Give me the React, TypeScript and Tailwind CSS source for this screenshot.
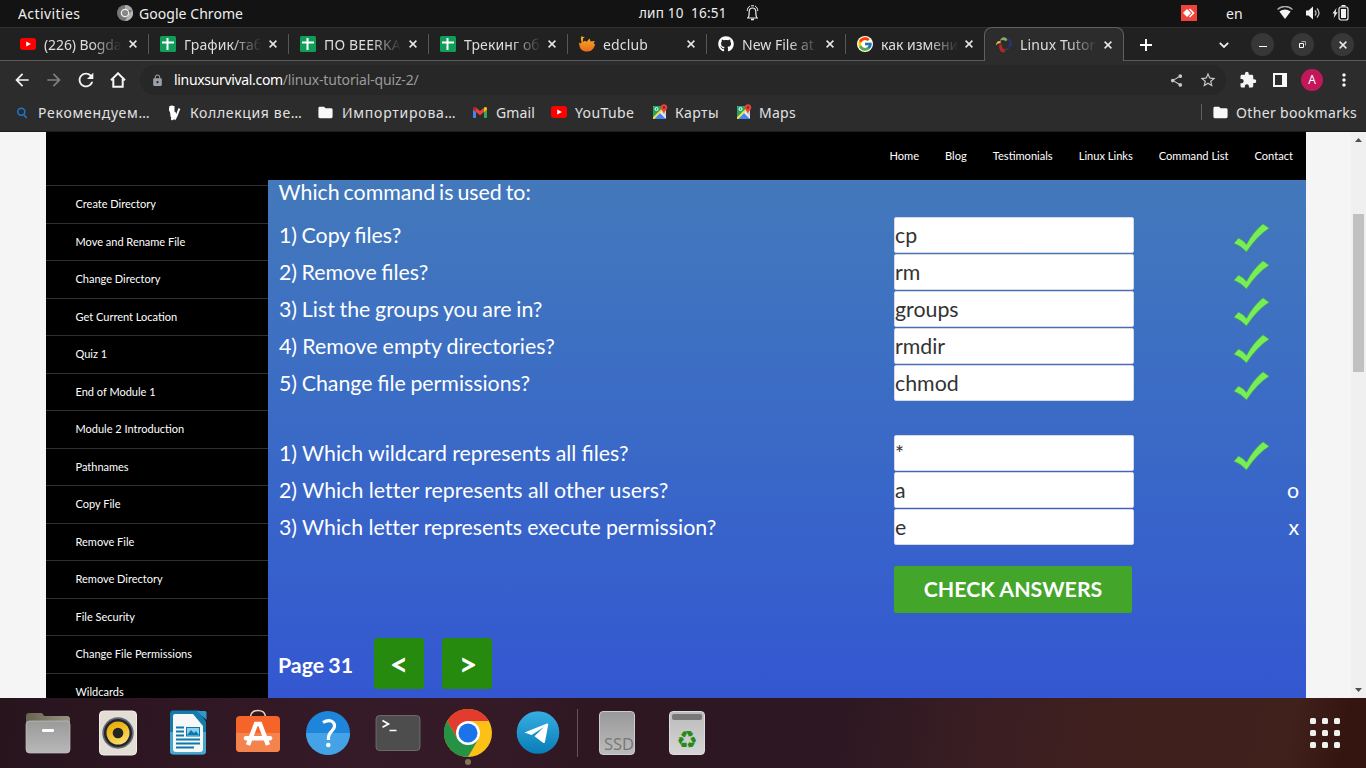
import React from "react";
import {
  MdArrowBack, MdArrowForward, MdRefresh, MdShare, MdStarBorder, MdExtension, MdLock, MdFolder, MdMoreVert,
} from "react-icons/md";
import { FaGithub } from "react-icons/fa";
import { FcGoogle } from "react-icons/fc";

const YouTube = () => (
  <svg width="16" height="12" viewBox="0 0 16 12"><rect width="16" height="12" rx="3" fill="#f00" /><path d="M6.2 3.5 11 6 6.2 8.5z" fill="#fff" /></svg>
);
const Sheets = () => (
  <svg width="16" height="16" viewBox="0 0 16 16"><rect width="16" height="16" rx="1.5" fill="#0f9d58" /><path d="M6.500 2h2v12h-2zM2 5.5h12v2H2z" fill="#fff" /></svg>
);
const Fox = () => (
  <svg width="16" height="16" viewBox="0 0 16 16">
    <defs><linearGradient id="fox" x1="0" y1="0" x2="0" y2="1"><stop offset="0" stopColor="#f5b51f" /><stop offset="1" stopColor="#ec6a1d" /></linearGradient></defs>
    <path d="M2.5.3 6 1.4 3.8 2.2C4.8 3.6 3.4 4.5 4.1 5.8L6 4.7 7.6 5.7 10.5 2.6 11.6 5.5 15.8 5.1 14.6 7.4 16 8.3C15.4 12.5 12.5 15.8 8 15.5 3.6 15.6.8 13 .5 9.5L0 6.4 2 7.4C3.6 5.8.7 3.5 2.5.3z" fill="url(#fox)" />
  </svg>
);
const Swirl = () => (
  <svg width="16" height="16" viewBox="0 0 16 16">
    <path d="M4 4C5-.5 10-1 11.5 3L9.5 4.2C8 2.5 6 2.7 4 4z" fill="#7fae67" />
    <path d="M0 8.5C.2 4.5 2.500 3 5 4.6L4.300 6.5C3 6 1.500 6.800 0 8.500z" fill="#f2b13c" />
    <path d="M3.500 7.500 5.700 7.200C5.600 10.400 7 11.500 9.500 14.5 6.5 17.3 1.8 13 3.500 7.500z" fill="#bd2427" />
    <path d="M12 1.500C16.800 3.500 17.2 9.500 13 10.500L12.300 8.800C14 7 13.8 4.500 11.5 2.300z" fill="#27347e" />
    <path d="M7.200 11.700C9 13 11 12.8 12.500 11.400" stroke="#55484e" strokeWidth="1" fill="none" />
  </svg>
);
const MapsIcon = () => (
  <svg width="16" height="16" viewBox="0 0 16 16">
    <rect x="1" y="2" width="13" height="13" rx="1" fill="#eee" />
    <path d="M2 2h7.5L10 5 1 14V3z" fill="#1fa463" /><path d="M2 15 8 9l6 6z" fill="#4285f4" /><path d="M9 7.5 14 13v-5l-3-2z" fill="#d2d5d8" />
    <path d="M1 13.2 9.3 5 10.5 6.3 2 15H1z" fill="#fdd835" />
    <circle cx="4.5" cy="5" r="1.5" fill="none" stroke="#fff" />
    <path d="M12 .2c-2 0-3.4 1.5-3.4 3.3 0 2.5 2.8 3.2 3.4 6.8.5-3.6 3.3-4.3 3.3-6.8C15.300 1.700 13.900.2 12 .2z" fill="#ea4335" /><circle cx="12" cy="3.500" r="1.200" fill="#8c2018" />
  </svg>
);
const Gmail = () => (
  <svg width="14" height="11" viewBox="0 0 14 11">
    <path d="M0 2v8.300c0 .4.3.7.7.7H3V4z" fill="#4285f4" /><path d="M14 2v8.300c0 .4-.3.700-.7.700H11V4z" fill="#34a853" />
    <path d="M3 .7v4.300L0 2.700V1.500C0 .2 1.600-.4 2.500.3z" fill="#c5221f" /><path d="M3 .8 7 4l4-3.200V5L7 8.200 3 5z" fill="#ea4335" /><path d="M11 .8v4.200l3-2.300V1.500C14 .2 12.400-.4 11.500.3z" fill="#fbbc04" />
  </svg>
);
const Cross = ({ s = 8 }: { s?: number }) => (
  <svg width={s} height={s} viewBox="0 0 8 8"><path d="M.6.6 7.400 7.400M7.400.6.6 7.400" stroke="#e8e8e8" strokeWidth="1.500" /></svg>
);

const tabs = [
  { t: "(226) Bogda", icon: <YouTube />, w: "w-[140px]", s: "tracking-[-0.1px]" },
  { t: "График/таб", icon: <Sheets />, w: "w-[140px]", s: "tracking-[0.1px]" },
  { t: "ПО BEERKA", icon: <Sheets />, w: "w-[140px]", s: "tracking-[0.15px]" },
  { t: "Трекинг об", icon: <Sheets />, w: "w-[139px]", s: "tracking-[0.1px]" },
  { t: "edclub", icon: <Fox />, w: "w-[139px]", s: "tracking-[0.15px]" },
  { t: "New File at", icon: <FaGithub size={16} color="#fff" />, w: "w-[139px]", s: "tracking-[0px]" },
  { t: "как измени", icon: <span className="flex rounded-full bg-white"><FcGoogle size={16} /></span>, w: "w-[139px]", s: "tracking-[0px]" },
];

function TopBar() {
  return (
    <div className="flex h-[27px] bg-[#131313] text-[14px] leading-[27px] text-[#eeeeee]">
      <span className="ml-[18px] w-[99px] tracking-[0.4px]">Activities</span>
      <svg className="mt-[5px]" width="16" height="16" viewBox="0 0 16 16">
        <circle cx="8" cy="8" r="8" fill="#777" /><path d="M8 0a8 8 0 0 1 7.500 5H8z" fill="#aaa" /><path d="M15.500 5A8 8 0 0 1 8 16l4-7z" fill="#b4b4b4" />
        <circle cx="8" cy="8" r="3.700" fill="#888" stroke="#eee" strokeWidth="1.200" />
      </svg>
      <span className="ml-[6px] w-[500px] tracking-[0.05px]">Google Chrome</span>
      <span className="w-[107px] whitespace-pre text-[13.500px] leading-[26px] tracking-[0.2px]">лип 10  16:51</span>
      <svg className="mt-[5px]" width="13" height="16" viewBox="0 0 13 16" fill="none" stroke="#eee">
        <path d="M1 13h11M2.300 12.500C3.400 10.500 3 9 3.200 6.500 3.300 4.200 4.700 3 6.500 3s3.200 1.200 3.300 3.500c.2 2.500-.2 4 .9 6" strokeWidth="1.200" /><path d="M1.200 6C1.400 3.500 2.200 2 4 1M11.800 6C11.600 3.500 10.800 2 9 1M5 .8h3" strokeWidth="1" /><path d="M5 14.500h3" strokeWidth="1.600" />
      </svg>
      <svg className="mt-[5px] ml-[422px]" width="16" height="16" viewBox="0 0 16 16"><rect width="16" height="16" fill="#ef443b" /><path d="m2 8 4-4 4 4-4 4z" fill="#fff" /><path d="m8.500 4 4 4-4 4" fill="none" stroke="#fff" strokeWidth="1.600" /></svg>
      <span className="ml-[29px] w-[51px]">en</span>
      <svg className="mt-[6px]" width="16" height="14" viewBox="0 0 16 14"><path d="M.5 3.500C5-.6 11-.6 15.500 3.500" stroke="#aaa" strokeWidth="1.500" fill="none" /><path d="M2.400 5.500Q8 1.500 13.600 5.500L8 13z" fill="#f2f2f2" /></svg>
      <svg className="mt-[6px] ml-[13px]" width="15" height="14" viewBox="0 0 15 14"><path d="M0 4.500h2.500L7 .5v13L2.500 9.500H0z" fill="#f2f2f2" /><path d="M9 4.500q2 2.500 0 5M11 2.500q4 4.500 0 9" stroke="#bbb" strokeWidth="1.300" fill="none" /></svg>
      <svg className="mt-[5px] ml-[11px]" width="17" height="16" viewBox="0 0 17 16"><path d="M4.500 3 .5 8.600h2L1.700 13l4-5.800H3.600z" fill="#eee" /><rect x="7" y="2" width="9" height="13" rx="2" fill="none" stroke="#eee" strokeWidth="1.200" /><path d="M9 4h5v9H9zM9.500 0h4v1.500h-4z" fill="#f2f2f2" /></svg>
    </div>
  );
}

function TabStrip() {
  return (
    <div className="flex h-[34px] border-t border-[#303030] bg-[#212121] pl-[9px] text-[14px] text-[#dedede] shadow-[inset_0_-1px_0_#5a5a5a]">
      {tabs.map((x, i) => (
        <div key={x.t} className={`${x.w} flex h-[32px] shrink-0 items-center pl-[11px]`}>
          <span className="flex w-[16px] shrink-0 justify-center">{x.icon}</span>
          <span className={`${x.s} ml-[8px] w-[79px] shrink-0 whitespace-nowrap mask-r-from-60% mask-r-to-98%`}>{x.t}</span>
          <span className={`${i > 2 ? "ml-[5px]" : "ml-[6px]"} flex shrink-0`}><Cross /></span>
          <span className={`ml-auto h-[20px] w-px ${i < 6 ? "bg-[#575757]" : ""}`} />
        </div>
      ))}
      <div className="-mt-px -ml-[1px] flex h-[34px] w-[140px] shrink-0 items-center rounded-t-[8px] border border-b-0 border-[#606060] bg-[#2c2c2c] pl-[11px]">
        <Swirl />
        <span className="ml-[8px] w-[79px] shrink-0 whitespace-nowrap tracking-[0.1px] mask-r-from-60% mask-r-to-98%">Linux Tutor</span>
        <span className="ml-[5px] flex"><Cross /></span>
      </div>
      <div className="flex items-center">
        <svg className="ml-[16px]" width="12" height="12" viewBox="0 0 12 12"><path d="M6 0v12M0 6h12" stroke="#fff" strokeWidth="1.900" /></svg>
        <svg className="ml-[67px]" width="10" height="6" viewBox="0 0 10 6"><path d="m.8.8 4.200 4.200L9.200.8" fill="none" stroke="#eee" strokeWidth="1.800" /></svg>
        <div className="ml-[22px] flex gap-[17px]">
          <span className="flex size-[23px] items-center justify-center rounded-full bg-[#373737]"><span className="mt-[4px] h-px w-[8px] bg-white" /></span>
          <span className="flex size-[23px] items-center justify-center rounded-full bg-[#373737]"><svg width="9" height="9" viewBox="0 0 9 9" fill="none" stroke="#fff"><path d="M1.500 3.500h4v4h-4z" /><path d="M3.500 1.500h4v4" stroke="#aaa" /></svg></span>
          <span className="flex size-[23px] items-center justify-center rounded-full bg-[#373737]"><Cross /></span>
        </div>
      </div>
    </div>
  );
}

function Toolbar() {
  return (
    <div className="flex h-[38px] items-center bg-[#2c2c2c] text-white">
      <MdArrowBack className="ml-[12px]" size={20} color="#f5f5f5" />
      <MdArrowForward className="ml-[12px]" size={20} color="#808080" />
      <MdRefresh className="ml-[11px]" size={22} color="#f5f5f5" />
      <svg className="ml-[13px]" width="16" height="16" viewBox="0 0 16 16"><path d="M1 8.300 8 1.300l7 7M3.300 7v7.800h9.400V7" fill="none" stroke="#f5f5f5" strokeWidth="2" /></svg>
      <div className="ml-[14px] flex h-[30px] w-[1086px] items-center rounded-full bg-[#272727] pr-[9px] pl-[11px] text-[14px]">
        <MdLock size={13} color="#9aa0a6" />
        <span className="-mt-px ml-[10px] tracking-[-0.33px] text-white">linuxsurvival.com<span className="tracking-[-0.16px] text-[#9a9a9a]">/linux-tutorial-quiz-2/</span></span>
        <MdShare className="ml-auto" size={15} color="#c8c8c8" />
        <MdStarBorder className="ml-[15px]" size={18} color="#c8c8c8" />
      </div>
      <MdExtension className="ml-[13px]" size={18} color="#f5f5f5" />
      <svg className="ml-[16px]" width="14" height="14" viewBox="0 0 14 14"><path d="M0 0h14v14H0zM2 2v10h7V2z" fill="#f8f8f8" fillRule="evenodd" /></svg>
      <span className="ml-[14px] flex size-[22px] items-center justify-center rounded-full bg-[#c2185b] text-[12px]">A</span>
      <MdMoreVert className="ml-[11px]" size={20} color="#f5f5f5" />
    </div>
  );
}

function Bookmarks() {
  return (
    <div className="flex h-[33px] items-center border-b border-[#1c1c1c] bg-[#2c2c2c] pb-[6px] text-[14px] whitespace-nowrap text-[#e2e2e2]">
      <svg className="mt-[2px] ml-[16px]" width="12" height="12" viewBox="0 0 12 12"><circle cx="5.300" cy="4.800" r="3.500" fill="none" stroke="#1c78cd" strokeWidth="1.500" /><path d="m7.500 7.500 3.200 3.500" stroke="#1c78cd" strokeWidth="1.700" /></svg>
      <span className="ml-[10px] w-[130px] tracking-[0.75px]">Рекомендуем…</span>
      <svg className="mt-[1px]" width="14" height="16" viewBox="0 0 14 16"><path d="M3 .5C5.500 0 6.500 1.800 6 4.500L5.400 8C4 8.300 2.500 8 1.500 6.600.3 4.500 1 1.500 3 .5zM5.500 9C7 8 7.800 10 7 12c-.6 2-1.600 3.500-3 3.300C2.200 15 2.800 11 5.500 9z" fill="#fff" /><path d="M2.500 2h3v9h-2zM11.500 3.500C9.500 7 9.400 11 6.500 14.500M6.500 7 8.200 12" stroke="#fff" strokeWidth="2" fill="#fff" /></svg>
      <span className="ml-[8px] w-[128px] tracking-[0.65px]">Коллекция ве…</span>
      <MdFolder className="mt-[1px] -ml-px" size={17} color="#f8f8f8" />
      <span className="ml-[8px] w-[131px] tracking-[0.76px]">Импортирова…</span>
      <Gmail />
      <span className="ml-[9px] w-[55px] tracking-[0.1px]">Gmail</span>
      <YouTube />
      <span className="ml-[8px] w-[77px] tracking-[0.4px]">YouTube</span>
      <MapsIcon />
      <span className="ml-[7px] w-[61px] tracking-[0.4px]">Карты</span>
      <MapsIcon />
      <span className="ml-[7px] tracking-[0.25px]">Maps</span>
      <span className="ml-auto h-[16px] w-px bg-[#606060]" />
      <MdFolder className="mt-[1px] ml-[10px]" size={17} color="#f8f8f8" />
      <span className="ml-[7px] w-[130px] tracking-[0.35px]">Other bookmarks</span>
    </div>
  );
}

const side = ["Create Directory", "Move and Rename File", "Change Directory", "Get Current Location", "Quiz 1", "End of Module 1", "Module 2 Introduction", "Pathnames", "Copy File", "Remove File", "Remove Directory", "File Security", "Change File Permissions", "Wildcards"];
const nav = ["Home", "Blog", "Testimonials", "Linux Links", "Command List", "Contact"];
const first = [
  { q: "1) Copy files?", v: "cp", s: "[word-spacing:-1px]" },
  { q: "2) Remove files?", v: "rm", s: "[word-spacing:-1px]" },
  { q: "3) List the groups you are in?", v: "groups", s: "[word-spacing:-0.7px]" },
  { q: "4) Remove empty directories?", v: "rmdir", s: "[word-spacing:-0.3px]" },
  { q: "5) Change file permissions?", v: "chmod", s: "[word-spacing:-0.8px]" },
];
const second = [
  { q: "1) Which wildcard represents all files?", v: "*", a: "", s: "[word-spacing:-0.2px]" },
  { q: "2) Which letter represents all other users?", v: "a", a: "o", s: "[word-spacing:0px] [font-variant-ligatures:none]" },
  { q: "3) Which letter represents execute permission?", v: "e", a: "x", s: "[word-spacing:-0.2px] [font-variant-ligatures:none]" },
];

const Tick = () => (
  <svg className="mt-[6px] ml-[99px]" width="37" height="31" viewBox="0 0 37 31"><path d="M.8 20.300 5.500 15Q10 17 13.500 21.300 20 9 30 .8L36.200 5.300Q24 13 13.500 29 8 23 .8 20.300z" fill="#76ef57" stroke="#4c9a60" strokeWidth=".8" /></svg>
);
const Row = ({ q, v, a, s }: { q: string; v: string; a?: string; s: string }) => (
  <div className="flex h-[37px]">
    <span className={`${s} w-[615px] leading-[36px]`}>{q}</span>
    <span className="h-[36px] w-[240px] rounded-[2px] border border-[#d8d8e0] bg-white leading-[35px] text-[#333]">{v}</span>
    {a ? <span className="mr-[7px] ml-auto leading-[36px]">{a}</span> : <Tick />}
  </div>
);

function Page() {
  return (
    <div className="flex h-[566px] overflow-hidden bg-[#f5f5f5] font-['Lato',sans-serif]">
      <div className="ml-[46px] w-[1260px]">
        <div className="flex h-[48px] items-center justify-end gap-[26px] bg-black pr-[13px] text-[11.100px] text-white">
          {nav.map((n) => <span key={n}>{n}</span>)}
        </div>
        <div className="flex h-[518px]">
          <div className="w-[222px] overflow-hidden bg-black pt-[5px]">
            {side.map((s) => <div key={s} className="h-[37.5px] border-t border-[#303030] pl-[29.500px] text-[11px] leading-[36px] text-white">{s}</div>)}
          </div>
          <div className="flex w-[1038px] flex-col bg-linear-to-b from-[#4379bb] to-[#3457d1] pl-[11px] text-[21.330px] text-white">
            <div className="-ml-[0.5px] h-[37px] leading-[24px] [word-spacing:-1.5px]">Which command is used to:</div>
            {first.map((r) => <Row key={r.q} {...r} />)}
            <div className="h-[33px]" />
            {second.map((r) => <Row key={r.q} {...r} />)}
            <div className="mt-[20px] ml-[615px] h-[47px] w-[238px] rounded-[2px] bg-[#43a52a] text-center leading-[47px] font-bold">CHECK ANSWERS</div>
            <div className="mt-[25px] flex h-[51px] leading-[54px] font-bold">
              <span className="-ml-px w-[96px] [word-spacing:-1px]">Page 31</span>
              <span className="w-[50px] rounded-[3px] bg-[#258a0d] text-center text-[32px] leading-[52px]">&lt;</span>
              <span className="ml-[18px] w-[50px] rounded-[3px] bg-[#258a0d] pl-[2px] text-center text-[32px] leading-[52px]">&gt;</span>
            </div>
          </div>
        </div>
      </div>
      <div className="ml-auto flex w-[15px] flex-col items-center bg-[#f0f0f0]">
        <svg className="mt-[6px]" width="7" height="4" viewBox="0 0 7 4"><path d="M0 4 3.500 0 7 4z" fill="#505050" /></svg>
        <span className="mt-[72px] ml-[-1px] h-[158px] w-[11px] bg-[#c1c1c1]" />
        <svg className="mt-auto mb-[6px]" width="7" height="4" viewBox="0 0 7 4"><path d="M0 0 3.500 4 7 0z" fill="#505050" /></svg>
      </div>
    </div>
  );
}

const dock = [
  <svg key="files" width="48" height="48" viewBox="0 0 48 48"><defs><linearGradient id="grey" x1="0" y1="0" x2="0" y2="1"><stop offset="0" stopColor="#9a9a9a" /><stop offset="1" stopColor="#b8b8b8" /></linearGradient><linearGradient id="folder"><stop stopColor="#67634f" /><stop offset="1" stopColor="#979582" /></linearGradient></defs><path d="M2 8q0-3 3-3h12q2 0 3 3h23q3 0 3 3v16H2z" fill="url(#folder)" /><rect x="2" y="13" width="44" height="32" rx="3.500" fill="url(#grey)" stroke="#c2c2c2" strokeWidth=".7" /><rect x="18" y="21" width="12" height="3" rx="1" fill="#fff" /></svg>,
  <svg key="music" width="48" height="48" viewBox="0 0 48 48"><defs><linearGradient id="yellow" x1="0" y1="0" x2=".5" y2="1"><stop stopColor="#e4a50a" /><stop offset=".5" stopColor="#efbd22" /><stop offset="1" stopColor="#f7db67" /></linearGradient></defs><rect x="5.500" y="3" width="37" height="44" rx="4" fill="#e3ded5" stroke="#f1ede6" /><circle cx="24" cy="25" r="15.700" fill="#646770" /><circle cx="24" cy="25" r="14" fill="#22252e" /><circle cx="24" cy="25" r="11.500" fill="url(#yellow)" /><circle cx="24" cy="25" r="5.300" fill="#242424" /></svg>,
  <svg key="writer" width="48" height="48" viewBox="0 0 48 48"><path d="M9 2.500h26L42 14v29q0 3.500-3.500 3.500h-29Q6 46.500 6 43V6q0-3.500 3-3.500z" fill="#137cad" /><path d="M6 24h36v19q0 3.500-3.500 3.500h-29Q6 46.500 6 43z" fill="#47a6cf" /><path d="M11 6h18l10 12v23q0 3-3 3H12q-3 0-3-3V8q0-2 2-2z" fill="#f7f7f7" /><path d="M33 3h8q1.500 0 1.500 1.500V12z" fill="#3099cc" /><path d="M12 19.500h8M12 23.500h8M12 27.500h8M12 31.500h24M12 35.500h24M12 39.500h18" stroke="#0e78ae" strokeWidth="1.800" /><rect x="22.500" y="19.500" width="13" height="8.500" fill="#8cd0ee" stroke="#0e78ae" /><path d="m23 27 4-5 3 3 2-2 3 4z" fill="#0e78ae" /></svg>,
  <svg key="software" width="48" height="48" viewBox="0 0 48 48"><path d="M16.500 10V8.500C17 .5 31 .5 31.500 8.500V10" fill="none" stroke="#f4d6ab" strokeWidth="1.700" /><rect x="2" y="8" width="44" height="36" rx="4" fill="#f56428" /><path d="M2 25h44v15q0 4-4 4H6q-4 0-4-4z" fill="#f5834e" /><g fill="none" stroke="#fff" strokeWidth="4.500"><path d="m14 37 8-21h4l8 21" /><path d="M12 30.300h24" strokeLinecap="round" /></g></svg>,
  <svg key="help" width="48" height="48" viewBox="0 0 48 48"><circle cx="24" cy="25" r="22" fill="#1d86da" /><path d="M2 25a22 22 0 0 0 44 0z" fill="#44a2e6" /><path d="M19 14.500C25.500 10.500 31 13.500 30.500 18.500c-.4 4.500-6 5-6 11V32" fill="none" stroke="#fff" strokeWidth="3.200" /><circle cx="24.300" cy="37" r="2.300" fill="#fff" /></svg>,
  <svg key="terminal" width="48" height="48" viewBox="0 0 48 48"><rect x="2" y="7.500" width="44" height="35" rx="3.500" fill="#4d4d4d" stroke="#777" strokeWidth=".8" /><path d="m8.500 12.500 6 3.400-6 3.400M15.500 22.500h7" fill="none" stroke="#fff" strokeWidth="1.700" /></svg>,
  <svg key="chrome" width="48" height="48" viewBox="0 0 48 48"><circle cx="24" cy="24" r="24" fill="#fbc116" /><path d="M3.200 12A24 24 0 0 1 44.800 12H24L13.600 30z" fill="#e33b2e" /><path d="M3.200 12 13.600 30 24 36l10.400-6L24 48A24 24 0 0 1 3.200 12z" fill="#269245" /><circle cx="24" cy="24" r="12" fill="#fff" /><circle cx="24" cy="24" r="9.500" fill="#1a73e8" /></svg>,
  <svg key="telegram" width="48" height="48" viewBox="0 0 48 48"><defs><linearGradient id="tg" x1="0" y1="0" x2="0" y2="1"><stop stopColor="#37aee2" /><stop offset="1" stopColor="#087db8" /></linearGradient></defs><circle cx="24" cy="24.500" r="21.300" fill="url(#tg)" /><path d="m10.500 24.500 22.500-9q1.500-.4 1.200 1.300L31 34q-.4 1.700-2 .7l-8.500-6.500L30 19l-12.500 8z" fill="#fff" /></svg>,
];

function Dock() {
  return (
    <div className="flex h-[70px] bg-[linear-gradient(100deg,#27151e_0%,#2d1621_10%,#351a27_25%,#341926_38%,#2e1721_43%,#2c1722_61%,#381d23_70%,#40201e_81%,#40211c_94%,#341510_98%)] pl-[13px]">
      {dock.map((d, i) => (
        <div key={i} className={`flex w-[70px] shrink-0 flex-col items-center ${i === 6 ? "pt-[11px]" : "pt-[10px]"}`}>
          {d}{i === 6 && <span className="mt-[2px] size-[6px] rounded-full bg-[#807757]" />}
        </div>
      ))}
      <div className="mx-[4px] mt-[11px] h-[48px] w-px bg-[#655460]" />
      <div className="flex w-[70px] justify-center pt-[13px]"><div className="flex h-[44px] w-[36px] items-end justify-center rounded-[4px] border border-[#cdcdcd] bg-linear-to-b from-[#999] to-[#bbb] pl-[4px] font-['Open_Sans',sans-serif] text-[16.500px] leading-[20px] text-[#777]">SSD</div></div>
      <div className="flex w-[70px] justify-center pt-[13px]"><div className="flex h-[44px] w-[36px] flex-col items-center rounded-[4px] border border-[#ddd] bg-linear-to-b from-[#bbb] to-[#d5d5d5] pt-[2px]"><span className="mb-[9px] h-[6px] w-[30px] rounded-[2px] bg-[#787878]" /><span className="font-['DejaVu_Sans',sans-serif] text-[24px] leading-[22px] text-[#258a16]">♻</span></div></div>
      <div className="mt-[20px] mr-[26px] ml-auto grid h-[30px] w-[30px] grid-cols-3 gap-[6px]">{Array.from({ length: 9 }, (_, i) => <span key={i} className="size-[6px] rounded-[1.500px] bg-[#f0f0f0]" />)}</div>
    </div>
  );
}

export default function App() {
  return (
    <div className="h-[768px] w-[1366px] overflow-hidden bg-[#2c2c2c] font-['Noto_Sans',sans-serif]">
      <TopBar /><TabStrip /><Toolbar /><Bookmarks /><Page /><Dock />
    </div>
  );
}
